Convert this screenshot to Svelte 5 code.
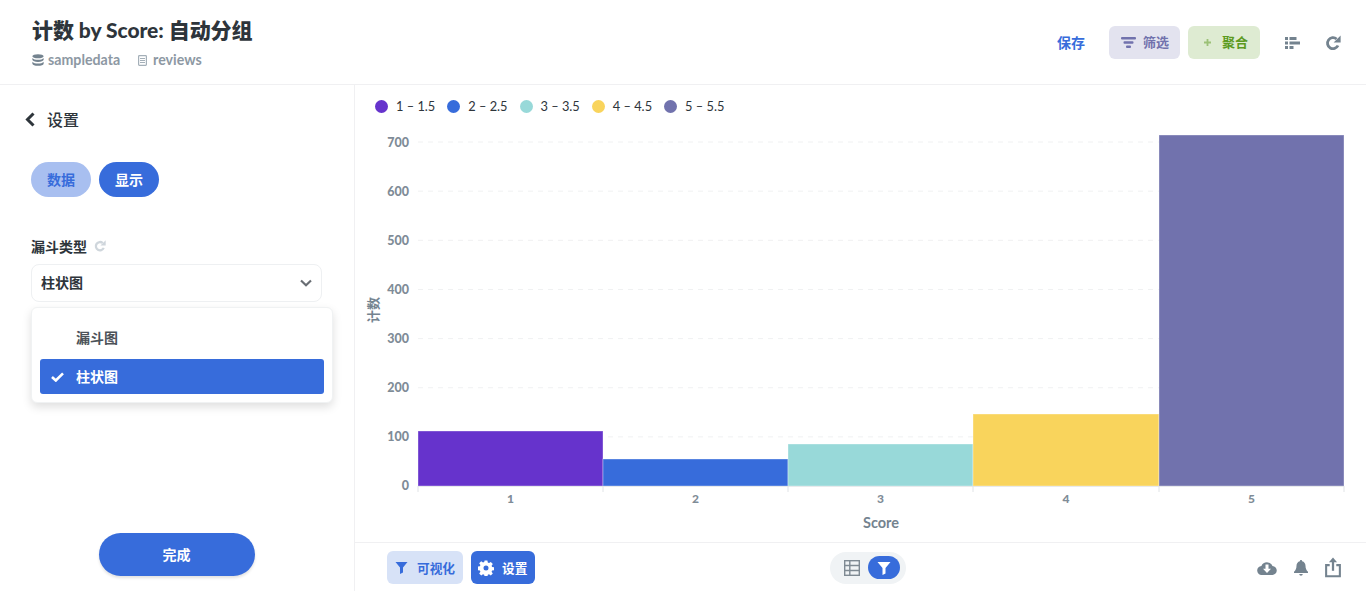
<script>
    const legend = [
        { label: '1 – 1.5', color: '#6633cc' },
        { label: '2 – 2.5', color: '#376cdb' },
        { label: '3 – 3.5', color: '#98d9d9' },
        { label: '4 – 4.5', color: '#f9d45c' },
        { label: '5 – 5.5', color: '#7172ad' }
    ];

    // chart svg starts at x=355, y=122 on the page
    const baseY = 364;
    const step = 49.14;
    const ticks = [0, 100, 200, 300, 400, 500, 600, 700];
    const bars = [
        { x: 63, w: 185, top: 309, color: '#6633cc', label: '1' },
        { x: 248, w: 185, top: 337, color: '#376cdb', label: '2' },
        { x: 433, w: 185, top: 322, color: '#98d9d9', label: '3' },
        { x: 618, w: 186, top: 292, color: '#f9d45c', label: '4' },
        { x: 804, w: 185, top: 13, color: '#7172ad', label: '5' }
    ];
    const edges = [63, 248, 433, 618, 804, 989];
</script>

<div class="page">
    <header class="top">
        <div class="titles">
            <h1>计数 by Score: 自动分组</h1>
            <div class="crumbs">
                <span class="crumb">
                    <svg width="12" height="12" viewBox="0 0 16 16" fill="#74838f">
                        <ellipse cx="8" cy="3" rx="7.5" ry="2.8" />
                        <path d="M.5 5.2C1.6 7 4.8 7.6 8 7.6s6.4-.6 7.5-2.4v2.6C15.5 9.5 12 10.6 8 10.6S.5 9.5.5 7.8zM.5 10.2c1.100 1.800 4.300 2.400 7.500 2.400s6.400-.6 7.500-2.400v2.800c0 1.600-3.500 2.800-7.500 2.800S.5 14.600.5 13z" />
                    </svg>
                    sampledata
                </span>
                <span class="crumb second">
                    <svg width="9" height="11" viewBox="0 0 9 11" fill="none" stroke="#a4afb8" stroke-width="1.200">
                        <rect x=".6" y=".6" width="7.800" height="9.800" rx=".8" />
                        <path d="M2 3.500h5M2 5.500h5M2 7.500h5" />
                    </svg>
                    reviews
                </span>
            </div>
        </div>
        <div class="actions">
            <button class="save">保存</button>
            <button class="chip filter">
                <svg width="15" height="11" viewBox="0 0 15 11" fill="#7172ad">
                    <rect x="0" y="0" width="15" height="2.400" rx="1" />
                    <rect x="2.500" y="4.300" width="10" height="2.400" rx="1" />
                    <rect x="5" y="8.600" width="5" height="2.400" rx="1" />
                </svg>
                <span>筛选</span>
            </button>
            <button class="chip summarize">
                <svg width="7" height="7" viewBox="0 0 7 7" fill="#9cc177">
                    <path d="M2.600 0h1.800v2.600H7v1.800H4.400V7H2.600V4.400H0V2.600h2.600z" />
                </svg>
                <span>聚合</span>
            </button>
            <svg class="tool" width="15" height="12" viewBox="0 0 15 12" fill="#74838f">
                <rect x="0" y="0" width="3" height="3" />
                <rect x="4.500" y="0" width="7" height="3" />
                <rect x="0" y="4.500" width="3" height="3" />
                <rect x="4.500" y="4.500" width="10.500" height="3" />
                <rect x="0" y="9" width="3" height="3" />
                <rect x="4.500" y="9" width="4" height="3" />
            </svg>
            <svg class="tool refresh" width="16" height="16" viewBox="0 0 16 16" fill="none">
                <path d="M13 10.500A5.500 5.500 0 1 1 11.600 4" stroke="#74838f" stroke-width="2.800" />
                <path d="M15.600.4v7H8.600z" fill="#74838f" />
            </svg>
        </div>
    </header>

    <div class="body">
        <aside class="side">
            <div class="back">
                <svg width="10" height="15" viewBox="0 0 10 15" fill="none">
                    <path d="M8.500 1.500 2.500 7.500l6 6" stroke="#2e353b" stroke-width="3" />
                </svg>
                <span>设置</span>
            </div>
            <div class="tabs">
                <button class="tab data"><span>数据</span></button>
                <button class="tab shown"><span>显示</span></button>
            </div>
            <div class="field-label">
                漏斗类型
                <svg width="12" height="12" viewBox="0 0 16 16" fill="none">
                    <path d="M13 10.500A5.500 5.500 0 1 1 11.600 4" stroke="#cfd6dc" stroke-width="3" />
                    <path d="M15.600.4v7H8.600z" fill="#cfd6dc" />
                </svg>
            </div>
            <div class="select-wrap">
                <div class="select">
                    <span>柱状图</span>
                    <svg width="12" height="8" viewBox="0 0 12 8" fill="none">
                        <path d="M1 1.500 6 6.200l5-4.700" stroke="#696e74" stroke-width="2.200" />
                    </svg>
                </div>
                <div class="menu">
                    <div class="item"><span>漏斗图</span></div>
                    <div class="item active">
                        <svg width="13" height="10" viewBox="0 0 13 10" fill="none">
                            <path d="M1 5l3.800 3.500L12 1.300" stroke="#fff" stroke-width="2.600" />
                        </svg>
                        <span>柱状图</span>
                    </div>
                </div>
            </div>
            <div class="done-row">
                <button class="done">完成</button>
            </div>
        </aside>

        <main class="main">
            <div class="legend">
                {#each legend as l}
                    <div class="legend-item">
                        <span class="dot" style={`background: ${l.color}`}></span>
                        <span>{l.label}</span>
                    </div>
                {/each}
            </div>

            <svg class="chart" width="1011" height="420" viewBox="0 0 1011 420">
                {#each ticks as t}
                    {#if t > 0}
                        <line x1="63" x2="989" y1={baseY - t * step / 100} y2={baseY - t * step / 100} stroke="#f0f1f2" stroke-dasharray="5 5" />
                    {/if}
                    <text class="tick" x="54" y={baseY - t * 49 / 100 + 3.500} text-anchor="end">{t}</text>
                {/each}
                {#each bars as b}
                    <rect x={b.x} y={b.top} width={b.w} height={baseY - b.top} fill={b.color} stroke="#fff" stroke-opacity=".35" stroke-width="1" />
                    <text class="xtick" x={b.x + b.w / 2} y="381" text-anchor="middle">{b.label}</text>
                {/each}
                <line x1="63" x2="989" y1="364.500" y2="364.500" stroke="#e8eaec" />
                {#each edges as e}
                    <line x1={e} x2={e} y1="364" y2="370" stroke="#e0e3e6" />
                {/each}
                <text class="axis" x="526" y="406" text-anchor="middle">Score</text>
                <text class="axis small" transform="translate(23 188) rotate(-90)" text-anchor="middle">计数</text>
            </svg>

            <footer class="foot">
                <div class="foot-left">
                    <button class="foot-btn vis">
                        <svg width="13" height="13" viewBox="0 0 13 13" fill="#376cdb">
                            <path d="M.5 1h12L8 6.500V11.500l-3 1.500V6.500z" />
                        </svg>
                        可视化
                    </button>
                    <button class="foot-btn cfg">
                        <svg width="16" height="16" viewBox="0 0 16 16">
                            <path fill="#fff" fill-rule="evenodd" d="M6.600.5h2.800l.4 2.100 1.200.5 1.800-1.200 2 2-1.200 1.800.5 1.200 2.100.4v2.800l-2.100.4-.5 1.200 1.200 1.800-2 2-1.800-1.200-1.200.5-.4 2.100H6.600l-.4-2.100-1.200-.5-1.800 1.200-2-2 1.200-1.800-.5-1.200-2.100-.4V6.600l2.100-.4.5-1.200-1.200-1.800 2-2 1.800 1.200 1.200-.5zM8 5.500a2.500 2.500 0 1 0 0 5 2.500 2.500 0 0 0 0-5z" />
                        </svg>
                        设置
                    </button>
                </div>
                <div class="toggle">
                    <span class="toggle-off">
                        <svg width="16" height="16" viewBox="0 0 16 16" fill="none" stroke="#7f8a93" stroke-width="1.400">
                            <rect x=".7" y=".7" width="14.600" height="14.600" />
                            <path d="M.7 5.500h14.600M.7 10.500h14.600M5.800.7v14.600" />
                        </svg>
                    </span>
                    <span class="toggle-on">
                        <svg width="14" height="14" viewBox="0 0 14 14" fill="#fff">
                            <path d="M.5 1h13L8.500 7v5.500l-3 1.500V7z" />
                        </svg>
                    </span>
                </div>
                <div class="foot-right">
                    <svg width="20" height="14" viewBox="0 0 20 14">
                        <path fill="#74838f" fill-rule="evenodd" d="M5 14a4.500 4.500 0 0 1-.6-9A6 6 0 0 1 15.500 5a4.500 4.500 0 0 1-.5 9zM8.500 3.500v4.200H6L10 12l4-4.300h-2.500V3.500z" />
                    </svg>
                    <svg width="16" height="16" viewBox="0 0 15 16" fill="#74838f">
                        <path d="M7.500 0c.7 0 1.100.5 1.100 1.200 2.200.5 3.400 2.300 3.400 4.600 0 3 1 4.600 2.500 6V13H.5v-1.200C2 10.400 3 8.800 3 5.800c0-2.300 1.200-4.100 3.400-4.600C6.400.5 6.800 0 7.500 0zM5.800 14h3.400c0 1-.7 1.700-1.700 1.700S5.800 15 5.800 14z" />
                    </svg>
                    <svg width="16" height="21" viewBox="0 0 17 21" fill="none">
                        <path d="M5 8H1.200v11.800h14.600V8H12" stroke="#74838f" stroke-width="2.200" />
                        <path d="M8.500 14V2.500" stroke="#74838f" stroke-width="2.400" />
                        <path d="M8.500 0l4.300 5H4.200z" fill="#74838f" />
                    </svg>
                </div>
            </footer>
        </main>
    </div>
</div>

<style>
    :global(body) {
        margin: 0;
        background: #fff;
        font-family: Lato, "Noto Sans CJK SC", sans-serif;
        color: #2e353b;
    }

    button {
        font-family: inherit;
        border: none;
        cursor: pointer;
        font-weight: 700;
    }

    .page {
        width: 1366px;
        height: 591px;
        display: flex;
        flex-direction: column;
        overflow: hidden;
    }

    .top {
        height: 85px;
        box-sizing: border-box;
        border-bottom: 1px solid #f0f0f2;
        display: flex;
        justify-content: space-between;
        align-items: flex-start;
        padding: 15px 25px 0 32px;
    }

    h1 {
        margin: 0;
        font-size: 21px;
        line-height: 30px;
        font-weight: 900;
        letter-spacing: -0.05px;
        color: #2e353b;
    }

    .crumbs {
        display: flex;
        gap: 18px;
        margin-top: 6px;
        font-size: 14.200px;
        line-height: 18px;
        font-weight: 700;
        color: #8d98a3;
    }

    .crumb {
        display: flex;
        align-items: center;
        gap: 4px;
    }

    .crumb.second {
        gap: 6px;
    }

    .actions {
        display: flex;
        align-items: center;
        margin-top: 11px;
        height: 33px;
    }

    .save {
        background: none;
        color: #376cdb;
        font-size: 14px;
        line-height: 16px;
        padding: 0;
        width: 28px;
        margin-right: 24px;
    }

    .chip {
        height: 33px;
        border-radius: 6px;
        font-size: 13px;
        display: flex;
        align-items: center;
        padding: 0;
    }

    .chip span {
        position: relative;
        top: -1px;
    }

    .filter {
        width: 71px;
        background: #e3e3ef;
        color: #7172ad;
        gap: 7px;
        padding-left: 12px;
        margin-right: 8px;
    }

    .summarize {
        width: 72px;
        background: #deebd2;
        color: #5c9a1e;
        gap: 11px;
        padding-left: 16px;
        margin-right: 25px;
    }

    .tool {
        flex: none;
    }

    .refresh {
        margin-left: 25px;
    }

    .body {
        flex: 1;
        display: flex;
        min-height: 0;
    }

    .side {
        width: 355px;
        box-sizing: border-box;
        border-right: 1px solid #f0f0f2;
        padding: 0 32px 0 31px;
        display: flex;
        flex-direction: column;
    }

    .back {
        display: flex;
        align-items: center;
        gap: 12px;
        height: 24px;
        margin-top: 22px;
        margin-left: -6px;
        font-size: 16px;
        font-weight: 500;
    }

    .tabs {
        display: flex;
        gap: 8px;
        margin-top: 31px;
    }

    .tab {
        width: 60px;
        height: 35px;
        border-radius: 18px;
        font-size: 14px;
        padding: 0 0 2px 0;
    }

    .tab.data {
        background: #a8bff0;
        color: #376cdb;
    }

    .tab.shown {
        background: #376cdb;
        color: #fff;
    }

    .field-label {
        display: flex;
        align-items: center;
        gap: 7px;
        height: 20px;
        margin-top: 39px;
        font-size: 14px;
        font-weight: 700;
    }

    .select-wrap {
        position: relative;
        margin-top: 8px;
    }

    .select {
        width: 291px;
        height: 38px;
        box-sizing: border-box;
        border: 1px solid #eef0f2;
        border-radius: 8px;
        display: flex;
        align-items: center;
        justify-content: space-between;
        padding: 0 9px 0 9px;
        font-size: 14px;
        font-weight: 700;
    }

    .select span {
        position: relative;
        top: -1px;
    }

    .menu {
        position: absolute;
        left: 0;
        top: 43px;
        width: 302px;
        height: 96px;
        box-sizing: border-box;
        background: #fff;
        border: 1px solid #f0f2f3;
        border-radius: 6px;
        box-shadow: 0 4px 10px rgba(0, 0, 0, 0.13);
        padding: 12px 8px 0 8px;
    }

    .item {
        height: 35px;
        margin-bottom: 4px;
        border-radius: 3px;
        display: flex;
        align-items: center;
        padding-left: 36px;
        font-size: 14px;
        font-weight: 700;
        color: #4c5258;
        position: relative;
    }

    .item span {
        position: relative;
        top: -1px;
    }

    .item.active {
        background: #376cdb;
        color: #fff;
    }

    .item svg {
        position: absolute;
        left: 11px;
        top: 13px;
    }

    .done-row {
        margin-top: auto;
        margin-bottom: 15px;
        display: flex;
        justify-content: center;
    }

    .done {
        width: 156px;
        height: 43px;
        border-radius: 22px;
        background: #376cdb;
        color: #fff;
        font-size: 14px;
        padding: 0 0 2px 0;
        box-shadow: 0 2px 3px rgba(0, 0, 0, 0.12);
    }

    .main {
        flex: 1;
        min-width: 0;
        display: flex;
        flex-direction: column;
    }

    .legend {
        display: flex;
        gap: 12px;
        height: 37px;
        box-sizing: border-box;
        padding: 13px 0 0 20px;
        font-size: 12.800px;
        line-height: 16px;
        color: #2e353b;
        align-items: flex-start;
    }

    .legend-item {
        display: flex;
        align-items: center;
        gap: 8px;
    }

    .dot {
        width: 13px;
        height: 13px;
        border-radius: 50%;
    }

    .chart {
        display: block;
        flex: none;
    }

    .tick {
        font-family: Lato, sans-serif;
        font-size: 12.500px;
        font-weight: 900;
        fill: #7f8c97;
    }

    .xtick {
        font-family: Lato, sans-serif;
        font-size: 12px;
        font-weight: 900;
        fill: #7f8c97;
    }

    .axis {
        font-family: Lato, "Noto Sans CJK SC", sans-serif;
        font-size: 14.500px;
        font-weight: 700;
        fill: #74838f;
    }

    .axis.small {
        font-size: 13px;
    }

    .foot {
        flex: 1;
        box-sizing: border-box;
        border-top: 1px solid #f0f0f2;
        display: grid;
        grid-template-columns: 1fr auto 1fr;
        align-items: center;
        padding: 1px 17px 0 32px;
    }

    .foot-left {
        display: flex;
        gap: 8px;
    }

    .foot-btn {
        height: 33px;
        border-radius: 6px;
        font-size: 12.700px;
        display: flex;
        align-items: center;
        padding: 0;
    }

    .vis {
        width: 76px;
        background: #d7e2f7;
        color: #376cdb;
        gap: 9px;
        padding-left: 8px;
    }

    .cfg {
        width: 64px;
        background: #376cdb;
        color: #fff;
        gap: 8px;
        padding-left: 7px;
    }

    .toggle {
        width: 76px;
        height: 32px;
        box-sizing: border-box;
        border-radius: 16px;
        background: #f0f3f5;
        display: flex;
        align-items: center;
        justify-content: space-between;
        padding: 0 6px 0 14px;
    }

    .toggle-off {
        display: flex;
    }

    .toggle-on {
        width: 32px;
        height: 23px;
        border-radius: 12px;
        background: #376cdb;
        display: flex;
        align-items: center;
        justify-content: center;
    }

    .foot-right {
        display: flex;
        align-items: center;
        justify-content: flex-end;
        gap: 16px;
        margin-right: 8px;
    }
</style>
